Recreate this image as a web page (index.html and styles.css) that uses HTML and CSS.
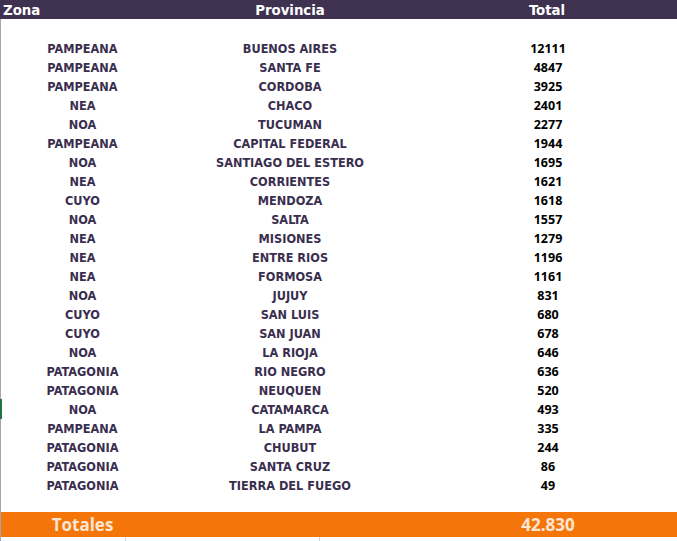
FILE: index.html
```html
<!DOCTYPE html>
<html lang="es">
<head>
<meta charset="utf-8">
<title>Provincias</title>
<link rel="stylesheet" href="styles.css">
</head>
<body>
<div class="sheet">
  <div class="head">
    <div class="h-zona">Zona</div>
    <div class="h-prov">Provincia</div>
    <div class="h-total">Total</div>
  </div>
  <div class="body">
    <div class="rows">
      <div class="row"><span class="z">PAMPEANA</span><span class="p">BUENOS AIRES</span><span class="t">12111</span></div>
      <div class="row"><span class="z">PAMPEANA</span><span class="p">SANTA FE</span><span class="t">4847</span></div>
      <div class="row"><span class="z">PAMPEANA</span><span class="p">CORDOBA</span><span class="t">3925</span></div>
      <div class="row"><span class="z">NEA</span><span class="p">CHACO</span><span class="t">2401</span></div>
      <div class="row"><span class="z">NOA</span><span class="p">TUCUMAN</span><span class="t">2277</span></div>
      <div class="row"><span class="z">PAMPEANA</span><span class="p">CAPITAL FEDERAL</span><span class="t">1944</span></div>
      <div class="row"><span class="z">NOA</span><span class="p">SANTIAGO DEL ESTERO</span><span class="t">1695</span></div>
      <div class="row"><span class="z">NEA</span><span class="p">CORRIENTES</span><span class="t">1621</span></div>
      <div class="row"><span class="z">CUYO</span><span class="p">MENDOZA</span><span class="t">1618</span></div>
      <div class="row"><span class="z">NOA</span><span class="p">SALTA</span><span class="t">1557</span></div>
      <div class="row"><span class="z">NEA</span><span class="p">MISIONES</span><span class="t">1279</span></div>
      <div class="row"><span class="z">NEA</span><span class="p">ENTRE RIOS</span><span class="t">1196</span></div>
      <div class="row"><span class="z">NEA</span><span class="p">FORMOSA</span><span class="t">1161</span></div>
      <div class="row"><span class="z">NOA</span><span class="p">JUJUY</span><span class="t">831</span></div>
      <div class="row"><span class="z">CUYO</span><span class="p">SAN LUIS</span><span class="t">680</span></div>
      <div class="row"><span class="z">CUYO</span><span class="p">SAN JUAN</span><span class="t">678</span></div>
      <div class="row"><span class="z">NOA</span><span class="p">LA RIOJA</span><span class="t">646</span></div>
      <div class="row"><span class="z">PATAGONIA</span><span class="p">RIO NEGRO</span><span class="t">636</span></div>
      <div class="row"><span class="z">PATAGONIA</span><span class="p">NEUQUEN</span><span class="t">520</span></div>
      <div class="row"><span class="z">NOA</span><span class="p">CATAMARCA</span><span class="t">493</span></div>
      <div class="row"><span class="z">PAMPEANA</span><span class="p">LA PAMPA</span><span class="t">335</span></div>
      <div class="row"><span class="z">PATAGONIA</span><span class="p">CHUBUT</span><span class="t">244</span></div>
      <div class="row"><span class="z">PATAGONIA</span><span class="p">SANTA CRUZ</span><span class="t">86</span></div>
      <div class="row"><span class="z">PATAGONIA</span><span class="p">TIERRA DEL FUEGO</span><span class="t">49</span></div>
    </div>
    <div class="totals">
      <span class="tot-label">Totales</span><span></span><span class="tot-value">42.830</span>
    </div>
    <div class="gridlines">
      <span class="gl"></span><span class="gl"></span><span class="gl"></span>
    </div>
    <div class="marker"></div>
  </div>
</div>
</body>
</html>
```

FILE: styles.css
```css
html, body {
  margin: 0;
  padding: 0;
  background: #ffffff;
}

.sheet {
  width: 677px;
  height: 541px;
  overflow: hidden;
  display: flex;
  flex-direction: column;
}

.head {
  height: 19px;
  background: #3f3150;
  display: grid;
  grid-template-columns: 164px 252px 262px;
  align-items: center;
  color: #ffffff;
  font-family: "DejaVu Sans Condensed", "DejaVu Sans", sans-serif;
  font-weight: bold;
  font-size: 14.8px;
  line-height: 19px;
}

.h-zona {
  padding-left: 3px;
}

.h-prov,
.h-total {
  text-align: center;
}

.body {
  position: relative;
  flex: 1;
  border-left: 1px solid #a6a6a6;
  display: flex;
  flex-direction: column;
}

.rows {
  padding-top: 20px;
  display: flex;
  flex-direction: column;
}

.row {
  height: 19px;
  display: grid;
  grid-template-columns: 163px 252px 264px;
  align-items: center;
  text-align: center;
}

.z,
.p {
  font-family: "DejaVu Sans Condensed", "DejaVu Sans", sans-serif;
  font-weight: bold;
  font-size: 12.6px;
  color: #3a2e4f;
}

.t {
  font-family: "Open Sans", sans-serif;
  font-weight: bold;
  font-size: 12.5px;
  color: #000000;
}

.totals {
  margin-top: 17px;
  height: 25px;
  background: #f4760b;
  display: grid;
  grid-template-columns: 163px 252px 264px;
  align-items: center;
  text-align: center;
  font-family: "Open Sans", sans-serif;
  font-weight: bold;
  font-size: 17px;
  color: #fbe6d4;
}

.gridlines {
  flex: 1;
  display: grid;
  grid-template-columns: 125px 194px 1fr;
}

.gl {
  border-right: 1px solid #d4d4d4;
}

.gl:last-child {
  border-right: none;
}

.marker {
  position: absolute;
  left: -1px;
  top: 380px;
  width: 2px;
  height: 20px;
  background: #217346;
}
```
